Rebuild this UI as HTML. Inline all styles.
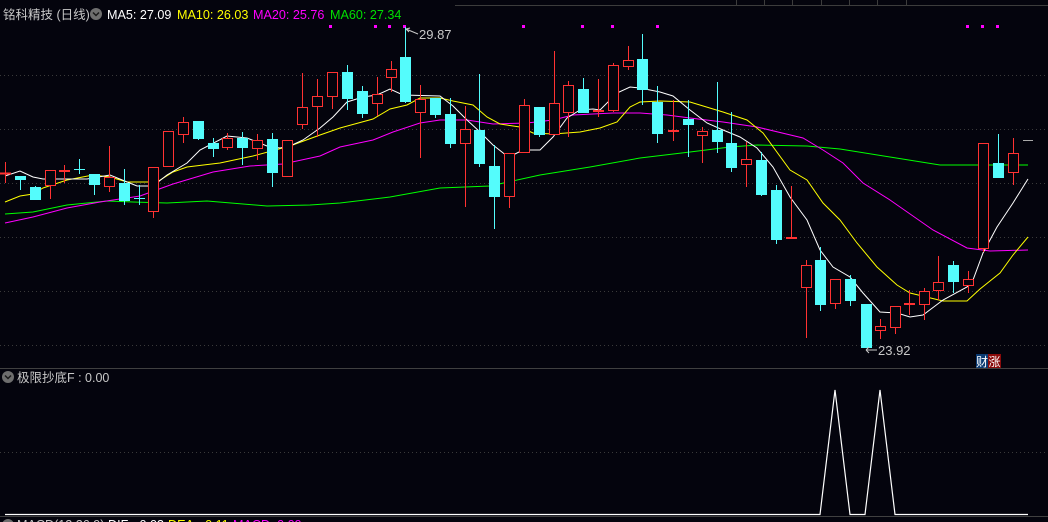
<!DOCTYPE html>
<html><head><meta charset="utf-8"><style>
html,body{margin:0;padding:0;background:#04040d;}
svg{display:block}
text{font-family:"Liberation Sans","Noto Sans CJK SC",sans-serif;}
</style></head><body>
<svg width="1048" height="522" viewBox="0 0 1048 522" xmlns="http://www.w3.org/2000/svg">
<rect width="1048" height="522" fill="#04040d"/>
<line x1="455" y1="5.5" x2="1048" y2="5.5" stroke="#3c3c3c"/>
<g stroke="#3c3c3c"><line x1="736.5" y1="0" x2="736.5" y2="5"/><line x1="764.5" y1="0" x2="764.5" y2="5"/><line x1="792.5" y1="0" x2="792.5" y2="5"/><line x1="821.5" y1="0" x2="821.5" y2="5"/><line x1="849.5" y1="0" x2="849.5" y2="5"/><line x1="877.5" y1="0" x2="877.5" y2="5"/><line x1="906.5" y1="0" x2="906.5" y2="5"/></g>
<g stroke="#3a3a3a" stroke-dasharray="1 3">
<line x1="0" y1="75.5" x2="1048" y2="75.5"/><line x1="0" y1="129.5" x2="1048" y2="129.5"/><line x1="0" y1="183.5" x2="1048" y2="183.5"/><line x1="0" y1="237.5" x2="1048" y2="237.5"/><line x1="0" y1="291.5" x2="1048" y2="291.5"/><line x1="0" y1="345.5" x2="1048" y2="345.5"/><line x1="0" y1="452.5" x2="1048" y2="452.5"/>
</g>
<line x1="0" y1="368.5" x2="1048" y2="368.5" stroke="#404040"/>
<line x1="0" y1="516.5" x2="1048" y2="516.5" stroke="#404040"/>
<text x="3" y="19" font-size="12.5" fill="#c8c8c8">铭科精技 (日线)</text>
<circle cx="96" cy="14" r="6" fill="#6e6e6e"/><path d="M93 12.5 L96 15.5 L99 12.5" stroke="#1a1a1a" stroke-width="1.5" fill="none"/>
<g font-size="12.6">
<text x="107" y="19" fill="#ffffff">MA5: 27.09</text>
<text x="177" y="19" fill="#ffff00">MA10: 26.03</text>
<text x="253" y="19" fill="#ff00ff">MA20: 25.76</text>
<text x="330" y="19" fill="#00e000">MA60: 27.34</text>
</g>
<g fill="#ff00ff"><rect x="329" y="25" width="3" height="3"/><rect x="374" y="25" width="3" height="3"/><rect x="388" y="25" width="3" height="3"/><rect x="403" y="25" width="3" height="3"/><rect x="522" y="25" width="3" height="3"/><rect x="581" y="25" width="3" height="3"/><rect x="611" y="25" width="3" height="3"/><rect x="656" y="25" width="3" height="3"/><rect x="966" y="25" width="3" height="3"/><rect x="981" y="25" width="3" height="3"/><rect x="996" y="25" width="3" height="3"/></g>
<polyline fill="none" stroke="#00ff00" stroke-width="1" points="5,214 33,212 67,205 107,201 133,202 167,203 207,201 267,206 310,205 340,203 390,197 440,188 490,186 540,175 590,167 640,158 690,152 730,147 757,145 807,146 840,149 890,157 940,165 1028,165"/>
<polyline fill="none" stroke="#ff00ff" stroke-width="1" points="5,223 33,217 67,208 100,202 140,196 173,184 213,172 250,166 283,164 320,156 340,147 373,140 393,132 420,123 440,120 467,120 493,124 527,123 553,120 573,115 613,113 640,113 667,115 690,118 723,122 757,127 803,138 823,150 843,163 863,183 890,200 933,230 967,248 990,251 1028,250"/>
<polyline fill="none" stroke="#ffff00" stroke-width="1" points="5,202 20,196 33,194 43,188 67,180 93,175 110,177 127,182 157,182 173,172 187,167 220,163 253,156 290,146 320,135 340,128 373,119 390,109 407,105 420,98 440,98 453,101 473,105 487,117 500,124 520,127 533,133 553,134 580,132 600,128 617,122 630,107 640,102 660,101 690,102 723,112 747,120 763,133 790,170 807,180 823,203 840,220 857,243 877,267 897,285 910,293 943,301 967,301 980,289 1000,273 1013,255 1028,237"/>
<polyline fill="none" stroke="#ffffff" stroke-width="1" points="5,176 20,171 33,177 43,179 87,179 110,175 137,186 153,186 167,175 187,163 200,150 227,136 247,138 267,146 280,148 290,146 303,140 320,128 333,117 347,102 363,97 377,95 390,89 403,95 440,96 453,106 467,120 480,132 493,145 507,156 513,155 523,150 540,150 553,137 567,118 580,110 593,109 600,110 617,93 630,87 640,88 660,92 673,96 690,110 707,123 723,130 740,137 757,148 773,167 790,197 807,220 820,250 833,267 850,277 863,293 880,312 897,313 910,317 923,315 943,300 967,287 973,280 983,253 997,227 1013,203 1028,179"/>
<g stroke-width="1">
<g stroke="#ff3232" fill="#04040d">
<line x1="5.5" y1="162" x2="5.5" y2="183"/><line x1="0" y1="173.5" x2="11" y2="173.5" stroke-width="2"/>
<line x1="50.5" y1="170" x2="50.5" y2="199"/><rect x="45.5" y="170.5" width="10" height="15"/>
<line x1="64.5" y1="165" x2="64.5" y2="183"/><line x1="59" y1="171" x2="70" y2="171" stroke-width="2"/>
<line x1="109.5" y1="146" x2="109.5" y2="192"/><rect x="104.5" y="177.5" width="10" height="9"/>
<line x1="153.5" y1="167" x2="153.5" y2="218"/><rect x="148.5" y="167.5" width="10" height="44"/>
<rect x="163.5" y="131.5" width="10" height="35"/>
<line x1="183.5" y1="117" x2="183.5" y2="143"/><rect x="178.5" y="122.5" width="10" height="12"/>
<line x1="227.5" y1="133" x2="227.5" y2="150"/><rect x="222.5" y="138.5" width="10" height="9"/>
<line x1="257.5" y1="134" x2="257.5" y2="160"/><rect x="252.5" y="140.5" width="10" height="8"/>
<rect x="282.5" y="140.5" width="10" height="36"/>
<line x1="302.5" y1="73" x2="302.5" y2="129"/><rect x="297.5" y="107.5" width="10" height="17"/>
<line x1="317.5" y1="79" x2="317.5" y2="137"/><rect x="312.5" y="96.5" width="10" height="10"/>
<line x1="332.5" y1="72" x2="332.5" y2="109"/><rect x="327.5" y="72.5" width="10" height="24"/>
<line x1="377.5" y1="77" x2="377.5" y2="116"/><rect x="372.5" y="94.5" width="10" height="9"/>
<line x1="391.5" y1="61" x2="391.5" y2="92"/><rect x="386.5" y="69.5" width="10" height="8"/>
<line x1="420.5" y1="85" x2="420.5" y2="158"/><rect x="415.5" y="99.5" width="10" height="13"/>
<line x1="465.5" y1="106" x2="465.5" y2="207"/><rect x="460.5" y="129.5" width="10" height="14"/>
<line x1="509.5" y1="153" x2="509.5" y2="208"/><rect x="504.5" y="153.5" width="10" height="43"/>
<line x1="524.5" y1="99" x2="524.5" y2="152"/><rect x="519.5" y="105.5" width="10" height="47"/>
<line x1="554.5" y1="51" x2="554.5" y2="134"/><rect x="549.5" y="103.5" width="10" height="31"/>
<line x1="568.5" y1="81" x2="568.5" y2="137"/><rect x="563.5" y="85.5" width="10" height="27"/>
<line x1="598.5" y1="79" x2="598.5" y2="117"/><line x1="593" y1="111" x2="604" y2="111" stroke-width="2"/>
<line x1="613.5" y1="63" x2="613.5" y2="112"/><rect x="608.5" y="65.5" width="10" height="45"/>
<line x1="628.5" y1="46" x2="628.5" y2="70"/><rect x="623.5" y="60.5" width="10" height="6"/>
<line x1="673.5" y1="100" x2="673.5" y2="141"/><line x1="668" y1="131" x2="679" y2="131" stroke-width="2"/>
<line x1="702.5" y1="127" x2="702.5" y2="163"/><rect x="697.5" y="131.5" width="10" height="4"/>
<line x1="746.5" y1="142" x2="746.5" y2="187"/><rect x="741.5" y="159.5" width="10" height="5"/>
<line x1="791.5" y1="186" x2="791.5" y2="238"/><line x1="786" y1="238" x2="797" y2="238" stroke-width="2"/>
<line x1="806.5" y1="260" x2="806.5" y2="338"/><rect x="801.5" y="265.5" width="10" height="22"/>
<line x1="835.5" y1="279" x2="835.5" y2="309"/><rect x="830.5" y="279.5" width="10" height="24"/>
<line x1="880.5" y1="319" x2="880.5" y2="339"/><rect x="875.5" y="326.5" width="10" height="4"/>
<line x1="895.5" y1="306" x2="895.5" y2="334"/><rect x="890.5" y="306.5" width="10" height="21"/>
<line x1="909.5" y1="290" x2="909.5" y2="315"/><line x1="904" y1="304" x2="915" y2="304" stroke-width="2"/>
<line x1="924.5" y1="288" x2="924.5" y2="320"/><rect x="919.5" y="291.5" width="10" height="13"/>
<line x1="938.5" y1="256" x2="938.5" y2="300"/><rect x="933.5" y="282.5" width="10" height="8"/>
<line x1="968.5" y1="271" x2="968.5" y2="293"/><rect x="963.5" y="279.5" width="10" height="6"/>
<line x1="983.5" y1="143" x2="983.5" y2="252"/><rect x="978.5" y="143.5" width="10" height="105"/>
<line x1="1013.5" y1="138" x2="1013.5" y2="185"/><rect x="1008.5" y="153.5" width="10" height="19"/>
</g>
<g stroke="#54fcfc" fill="#54fcfc">
<line x1="20.5" y1="176" x2="20.5" y2="190"/><rect x="15.5" y="176.5" width="10" height="3"/>
<line x1="35.5" y1="186" x2="35.5" y2="200"/><rect x="30.5" y="187.5" width="10" height="12"/>
<line x1="79.5" y1="159" x2="79.5" y2="174"/><line x1="74" y1="169.5" x2="85" y2="169.5"/>
<line x1="94.5" y1="174" x2="94.5" y2="195"/><rect x="89.5" y="174.5" width="10" height="10"/>
<line x1="124.5" y1="169" x2="124.5" y2="205"/><rect x="119.5" y="183.5" width="10" height="17"/>
<line x1="139.5" y1="185" x2="139.5" y2="205"/><line x1="134" y1="198.5" x2="145" y2="198.5"/>
<line x1="198.5" y1="121" x2="198.5" y2="140"/><rect x="193.5" y="121.5" width="10" height="17"/>
<line x1="213.5" y1="138" x2="213.5" y2="157"/><rect x="208.5" y="143.5" width="10" height="5"/>
<line x1="242.5" y1="132" x2="242.5" y2="165"/><rect x="237.5" y="138.5" width="10" height="9"/>
<line x1="272.5" y1="133" x2="272.5" y2="187"/><rect x="267.5" y="139.5" width="10" height="33"/>
<line x1="347.5" y1="65" x2="347.5" y2="110"/><rect x="342.5" y="72.5" width="10" height="26"/>
<line x1="362.5" y1="86" x2="362.5" y2="118"/><rect x="357.5" y="91.5" width="10" height="22"/>
<line x1="405.5" y1="27" x2="405.5" y2="103"/><rect x="400.5" y="57.5" width="10" height="44"/>
<line x1="435.5" y1="98" x2="435.5" y2="118"/><rect x="430.5" y="98.5" width="10" height="16"/>
<line x1="450.5" y1="98" x2="450.5" y2="148"/><rect x="445.5" y="114.5" width="10" height="29"/>
<line x1="479.5" y1="74" x2="479.5" y2="167"/><rect x="474.5" y="130.5" width="10" height="33"/>
<line x1="494.5" y1="145" x2="494.5" y2="229"/><rect x="489.5" y="166.5" width="10" height="30"/>
<line x1="539.5" y1="107" x2="539.5" y2="137"/><rect x="534.5" y="107.5" width="10" height="27"/>
<line x1="583.5" y1="78" x2="583.5" y2="113"/><rect x="578.5" y="89.5" width="10" height="23"/>
<line x1="642.5" y1="34" x2="642.5" y2="105"/><rect x="637.5" y="59.5" width="10" height="30"/>
<line x1="657.5" y1="86" x2="657.5" y2="143"/><rect x="652.5" y="102.5" width="10" height="31"/>
<line x1="688.5" y1="100" x2="688.5" y2="157"/><rect x="683.5" y="119.5" width="10" height="5"/>
<line x1="717.5" y1="82" x2="717.5" y2="153"/><rect x="712.5" y="130.5" width="10" height="11"/>
<line x1="731.5" y1="112" x2="731.5" y2="172"/><rect x="726.5" y="143.5" width="10" height="24"/>
<line x1="761.5" y1="152" x2="761.5" y2="196"/><rect x="756.5" y="160.5" width="10" height="34"/>
<line x1="776.5" y1="185" x2="776.5" y2="244"/><rect x="771.5" y="190.5" width="10" height="49"/>
<line x1="820.5" y1="247" x2="820.5" y2="311"/><rect x="815.5" y="260.5" width="10" height="44"/>
<line x1="850.5" y1="275" x2="850.5" y2="306"/><rect x="845.5" y="279.5" width="10" height="21"/>
<line x1="866.5" y1="304" x2="866.5" y2="348"/><rect x="861.5" y="304.5" width="10" height="43"/>
<line x1="953.5" y1="261" x2="953.5" y2="293"/><rect x="948.5" y="265.5" width="10" height="16"/>
<line x1="998.5" y1="134" x2="998.5" y2="178"/><rect x="993.5" y="163.5" width="10" height="14"/>
</g>
</g>
<line x1="1023" y1="140.5" x2="1033" y2="140.5" stroke="#aaaaaa"/>
<path d="M406 29 L418 34 M406 29 L410 28 M406 29 L409 32" stroke="#c8c8c8" fill="none"/>
<text x="419" y="39" font-size="13" fill="#c8c8c8">29.87</text>
<path d="M866 350 L877 350 M866 350 L869 347 M866 350 L869 353" stroke="#c8c8c8" fill="none"/>
<text x="878" y="355" font-size="13" fill="#c8c8c8">23.92</text>
<rect x="976" y="354" width="12" height="14" fill="#0a3a72"/>
<rect x="988" y="354" width="13" height="14" fill="#8a0a0a"/>
<text x="976" y="366" font-size="12" fill="#ffffff">财</text>
<text x="988.5" y="366" font-size="12" fill="#ffffff">涨</text>
<circle cx="8" cy="377" r="6" fill="#6e6e6e"/><path d="M5 375.5 L8 378.5 L11 375.5" stroke="#1a1a1a" stroke-width="1.5" fill="none"/>
<text x="17" y="382" font-size="12.5" fill="#c8c8c8">极限抄底F : 0.00</text>
<polyline fill="none" stroke="#ffffff" stroke-width="1.2" points="5,514.5 820,514.5 835,390 850,514.5 865,514.5 880,390 895,514.5 1028,514.5"/>
<circle cx="8" cy="525" r="6" fill="#6e6e6e"/>
<g font-size="12.6">
<text x="17" y="529" fill="#c8c8c8">MACD(12,26,9)</text>
<text x="108" y="529" fill="#ffffff">DIF: -0.03</text>
<text x="168" y="529" fill="#ffff00">DEA: -0.11</text>
<text x="233" y="529" fill="#ff00ff">MACD: 0.09</text>
</g>
</svg>
</body></html>
